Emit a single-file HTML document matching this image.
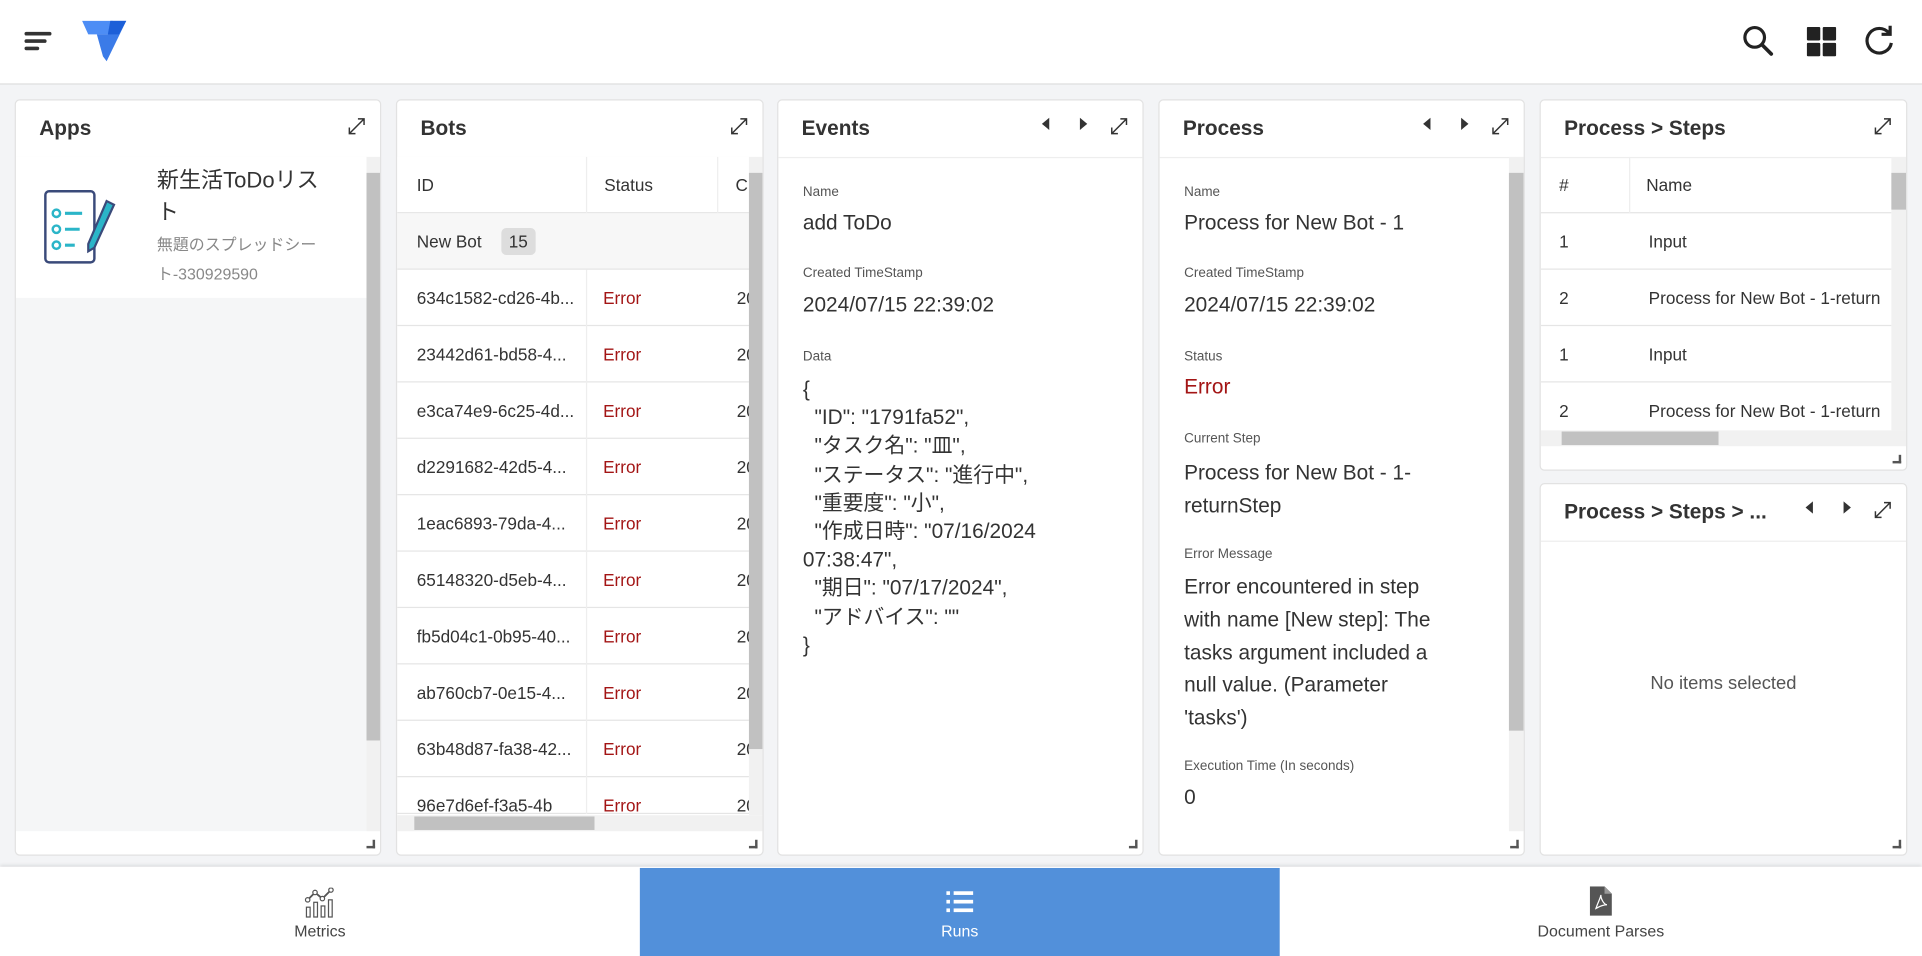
<!DOCTYPE html>
<html><head><meta charset="utf-8">
<style>
html,body{margin:0;padding:0;width:1922px;height:956px;overflow:hidden;background:#f3f4f6;}
#w{position:absolute;left:0;top:0;width:1568px;height:780px;transform:scale(1.22577,1.22594);transform-origin:0 0;font-family:"Liberation Sans","Noto Sans CJK JP",sans-serif;color:#333;background:#f3f4f6;}
.a{position:absolute;}
.hdr{left:0;top:0;width:1568px;height:68px;background:#fff;border-bottom:1px solid #ddd;}
.pn{position:absolute;background:#fff;border:1px solid #e2e2e2;border-radius:4px;box-sizing:border-box;overflow:hidden;}
.ph{position:absolute;left:0;top:0;right:0;height:46px;border-bottom:1px solid #eee;}
.pt{position:absolute;left:19px;top:13px;font-size:17px;font-weight:bold;color:#333;white-space:nowrap;}
.ex{position:absolute;top:12px;right:10px;width:18px;height:18px;}
.ar{position:absolute;top:14px;width:0;height:0;border-top:5px solid transparent;border-bottom:5px solid transparent;}
.al{border-right:6px solid #333;}
.arr{border-left:6px solid #333;}
.rs{position:absolute;right:4px;bottom:5px;width:7px;height:7px;border-right:2px solid #555;border-bottom:2px solid #555;box-sizing:border-box;}
.vs{position:absolute;width:12px;background:#f1f1f1;}
.th{position:absolute;left:0;width:12px;background:#c1c1c1;}
.lb{position:absolute;font-size:11px;color:#555;white-space:nowrap;}
.vl{position:absolute;font-size:17px;color:#333;white-space:nowrap;}
.row{position:absolute;left:0;height:46px;border-bottom:1px solid #e5e5e5;box-sizing:border-box;font-size:14px;}
.row span{position:absolute;top:15px;white-space:nowrap;}
.err{color:#a31515;}
.nav{position:absolute;top:708px;height:72px;text-align:center;font-size:13px;}
</style></head><body><div id="w">
<div class="a hdr">
 <div class="a" style="left:20px;top:26px;width:22px;height:3px;background:#333;border-radius:2px"></div>
 <div class="a" style="left:20px;top:32px;width:18px;height:3px;background:#333;border-radius:2px"></div>
 <div class="a" style="left:20px;top:38px;width:12px;height:3px;background:#333;border-radius:2px"></div>
 <svg class="a" style="left:66px;top:16px" width="38" height="36" viewBox="0 0 38 36">
  <polygon points="1,1 26,1 22,12 6,12" fill="#4d8df5"/>
  <polygon points="24,1 37,1 21,34 18,30 13,12 22,12" fill="#3b7be8"/>
  <polygon points="24,1 37,1 31,12 22,12" fill="#1c5fd8"/>
 </svg>
 <svg class="a" style="left:1421px;top:20px" width="26" height="26" viewBox="0 0 26 26"><circle cx="10.5" cy="10.5" r="8" fill="none" stroke="#222" stroke-width="2.6"/><line x1="16.5" y1="16.5" x2="24" y2="24" stroke="#222" stroke-width="3" stroke-linecap="round"/></svg>
 <svg class="a" style="left:1474px;top:22px" width="24" height="24" viewBox="0 0 24 24"><rect x="0" y="0" width="11" height="11" rx="1" fill="#222"/><rect x="13" y="0" width="11" height="11" rx="1" fill="#222"/><rect x="0" y="13" width="11" height="11" rx="1" fill="#222"/><rect x="13" y="13" width="11" height="11" rx="1" fill="#222"/></svg>
 <svg class="a" style="left:1520px;top:20px" width="26" height="26" viewBox="0 0 26 26"><path d="M21 7 A10 10 0 1 0 23 15" fill="none" stroke="#222" stroke-width="2.6"/><polyline points="22,1 22,8 15,8" fill="none" stroke="#222" stroke-width="2.6"/></svg>
</div>

<!-- Apps -->
<div class="pn" style="left:12px;top:81px;width:299px;height:617px">
 <div class="ph"><div class="pt">Apps</div><svg class="ex" viewBox="0 0 18 18"><path d="M3 15 L15 3 M10 3 H15 V8 M3 10 V15 H8" fill="none" stroke="#333" stroke-width="1.2"/></svg></div>
 <div class="a" style="left:0;top:46px;width:286px;height:550px;background:#f5f6f7"></div>
 <div class="a" style="left:0;top:46px;width:286px;height:115px;background:#fff"></div>
 <svg class="a" style="left:22px;top:70px" width="64" height="66" viewBox="0 0 64 66">
  <rect x="2" y="4" width="40" height="58" rx="3" fill="#fff" stroke="#3a4a7a" stroke-width="2"/>
  <circle cx="11" cy="22" r="3" fill="none" stroke="#2bb5c8" stroke-width="2"/><line x1="18" y1="22" x2="32" y2="22" stroke="#2bb5c8" stroke-width="2.5"/>
  <circle cx="11" cy="35" r="3" fill="none" stroke="#2bb5c8" stroke-width="2"/><line x1="18" y1="35" x2="30" y2="35" stroke="#2bb5c8" stroke-width="2.5"/>
  <circle cx="11" cy="48" r="3" fill="none" stroke="#2bb5c8" stroke-width="2"/><line x1="18" y1="48" x2="26" y2="48" stroke="#2bb5c8" stroke-width="2.5"/>
  <polygon points="52,12 58,15 42,50 37,53 37,47" fill="#2bb5c8" stroke="#3a4a7a" stroke-width="1.8"/>
 </svg>
 <div class="a" style="left:115px;top:52px;font-size:18px;line-height:26px;color:#333;white-space:nowrap">新生活ToDoリス<br>ト</div>
 <div class="a" style="left:115px;top:106px;font-size:13px;line-height:24px;color:#888;white-space:nowrap">無題のスプレッドシー<br>ト-330929590</div>
 <div class="vs" style="left:286px;top:46px;height:550px"><div class="th" style="top:13px;height:463px"></div></div>
 <div class="rs"></div>
</div>

<!-- Bots -->
<div class="pn" style="left:323px;top:81px;width:300px;height:617px">
 <div class="ph"><div class="pt">Bots</div><svg class="ex" viewBox="0 0 18 18"><path d="M3 15 L15 3 M10 3 H15 V8 M3 10 V15 H8" fill="none" stroke="#333" stroke-width="1.2"/></svg></div>
 <div class="row" style="top:46px;width:287px;background:#fff"><span style="left:16px">ID</span><span style="left:169px">Status</span><span style="left:276px">C</span></div>
 <div class="a" style="left:154px;top:46px;width:1px;height:46px;background:#eee"></div>
 <div class="a" style="left:261px;top:46px;width:1px;height:46px;background:#eee"></div>
 <div class="row" style="top:92px;width:287px;background:#f7f7f7"><span style="left:16px">New Bot</span><span style="left:85px;top:12px;background:#ddd;border-radius:4px;padding:3px 6px">15</span></div>
 <div class="row" style="top:138px;width:287px"><span style="left:16px">634c1582-cd26-4b...</span><span class="err" style="left:168px">Error</span><span style="left:277px">20</span></div>
 <div class="row" style="top:184px;width:287px"><span style="left:16px">23442d61-bd58-4...</span><span class="err" style="left:168px">Error</span><span style="left:277px">20</span></div>
 <div class="row" style="top:230px;width:287px"><span style="left:16px">e3ca74e9-6c25-4d...</span><span class="err" style="left:168px">Error</span><span style="left:277px">20</span></div>
 <div class="row" style="top:276px;width:287px"><span style="left:16px">d2291682-42d5-4...</span><span class="err" style="left:168px">Error</span><span style="left:277px">20</span></div>
 <div class="row" style="top:322px;width:287px"><span style="left:16px">1eac6893-79da-4...</span><span class="err" style="left:168px">Error</span><span style="left:277px">20</span></div>
 <div class="row" style="top:368px;width:287px"><span style="left:16px">65148320-d5eb-4...</span><span class="err" style="left:168px">Error</span><span style="left:277px">20</span></div>
 <div class="row" style="top:414px;width:287px"><span style="left:16px">fb5d04c1-0b95-40...</span><span class="err" style="left:168px">Error</span><span style="left:277px">20</span></div>
 <div class="row" style="top:460px;width:287px"><span style="left:16px">ab760cb7-0e15-4...</span><span class="err" style="left:168px">Error</span><span style="left:277px">20</span></div>
 <div class="row" style="top:506px;width:287px"><span style="left:16px">63b48d87-fa38-42...</span><span class="err" style="left:168px">Error</span><span style="left:277px">20</span></div>
 <div class="row" style="top:552px;width:287px;height:30px;overflow:hidden"><span style="left:16px">96e7d6ef-f3a5-4b</span><span class="err" style="left:168px">Error</span><span style="left:277px">20</span></div>
 <div class="a" style="left:154px;top:138px;width:1px;height:444px;background:#eee"></div>
 <div class="a" style="left:0;top:583px;width:299px;height:13px;background:#f1f1f1"><div class="a" style="left:14px;top:1px;width:147px;height:11px;background:#c1c1c1"></div></div>
 <div class="vs" style="left:287px;top:46px;height:537px"><div class="th" style="top:13px;height:470px"></div></div>
 <div class="rs"></div>
</div>

<!-- Events -->
<div class="pn" style="left:634px;top:81px;width:299px;height:617px">
 <div class="ph"><div class="pt">Events</div><div class="ar al" style="left:215px"></div><div class="ar arr" style="left:246px"></div><svg class="ex" viewBox="0 0 18 18"><path d="M3 15 L15 3 M10 3 H15 V8 M3 10 V15 H8" fill="none" stroke="#333" stroke-width="1.2"/></svg></div>
 <div class="lb" style="left:20px;top:69px">Name</div>
 <div class="vl" style="left:20px;top:90px">add ToDo</div>
 <div class="lb" style="left:20px;top:135px">Created TimeStamp</div>
 <div class="vl" style="left:20px;top:157px">2024/07/15 22:39:02</div>
 <div class="lb" style="left:20px;top:203px">Data</div>
 <div class="vl" style="left:20px;top:224px;line-height:23.2px;white-space:pre">{
  "ID": "1791fa52",
  "タスク名": "皿",
  "ステータス": "進行中",
  "重要度": "小",
  "作成日時": "07/16/2024
07:38:47",
  "期日": "07/17/2024",
  "アドバイス": ""
}</div>
 <div class="rs"></div>
</div>

<!-- Process -->
<div class="pn" style="left:945px;top:81px;width:299px;height:617px">
 <div class="ph"><div class="pt">Process</div><div class="ar al" style="left:215px"></div><div class="ar arr" style="left:246px"></div><svg class="ex" viewBox="0 0 18 18"><path d="M3 15 L15 3 M10 3 H15 V8 M3 10 V15 H8" fill="none" stroke="#333" stroke-width="1.2"/></svg></div>
 <div class="lb" style="left:20px;top:69px">Name</div>
 <div class="vl" style="left:20px;top:90px">Process for New Bot - 1</div>
 <div class="lb" style="left:20px;top:135px">Created TimeStamp</div>
 <div class="vl" style="left:20px;top:157px">2024/07/15 22:39:02</div>
 <div class="lb" style="left:20px;top:203px">Status</div>
 <div class="vl err" style="left:20px;top:224px">Error</div>
 <div class="lb" style="left:20px;top:270px">Current Step</div>
 <div class="vl" style="left:20px;top:291px;line-height:26.5px">Process for New Bot - 1-<br>returnStep</div>
 <div class="lb" style="left:20px;top:364px">Error Message</div>
 <div class="vl" style="left:20px;top:384px;line-height:26.8px">Error encountered in step<br>with name [New step]: The<br>tasks argument included a<br>null value. (Parameter<br>'tasks')</div>
 <div class="lb" style="left:20px;top:537px">Execution Time (In seconds)</div>
 <div class="vl" style="left:20px;top:559px">0</div>
 <div class="vs" style="left:285px;top:46px;height:550px"><div class="th" style="top:13px;height:455px"></div></div>
 <div class="rs"></div>
</div>

<!-- Steps -->
<div class="pn" style="left:1256px;top:81px;width:300px;height:303px">
 <div class="ph"><div class="pt">Process &gt; Steps</div><svg class="ex" viewBox="0 0 18 18"><path d="M3 15 L15 3 M10 3 H15 V8 M3 10 V15 H8" fill="none" stroke="#333" stroke-width="1.2"/></svg></div>
 <div class="row" style="top:46px;width:286px"><span style="left:15px">#</span><span style="left:86px">Name</span></div>
 <div class="a" style="left:72px;top:46px;width:1px;height:46px;background:#eee"></div>
 <div class="row" style="top:92px;width:286px"><span style="left:15px">1</span><span style="left:88px">Input</span></div>
 <div class="row" style="top:138px;width:286px;overflow:hidden"><span style="left:15px">2</span><span style="left:88px">Process for New Bot - 1-return</span></div>
 <div class="row" style="top:184px;width:286px"><span style="left:15px">1</span><span style="left:88px">Input</span></div>
 <div class="row" style="top:230px;width:286px;height:39px;overflow:hidden;border:0"><span style="left:15px">2</span><span style="left:88px">Process for New Bot - 1-return</span></div>
 <div class="a" style="left:0;top:269px;width:298px;height:13px;background:#f1f1f1"><div class="a" style="left:17px;top:1px;width:128px;height:11px;background:#c1c1c1"></div></div>
 <div class="vs" style="left:286px;top:46px;height:223px"><div class="th" style="top:13px;height:30px"></div></div>
 <div class="rs"></div>
</div>

<div class="pn" style="left:1256px;top:394px;width:300px;height:304px">
 <div class="ph"><div class="pt">Process &gt; Steps &gt; ...</div><div class="ar al" style="left:216px"></div><div class="ar arr" style="left:247px"></div><svg class="ex" viewBox="0 0 18 18"><path d="M3 15 L15 3 M10 3 H15 V8 M3 10 V15 H8" fill="none" stroke="#333" stroke-width="1.2"/></svg></div>
 <div class="a" style="left:0;width:298px;top:154px;text-align:center;font-size:15px;color:#555">No items selected</div>
 <div class="rs"></div>
</div>

<!-- Bottom nav -->
<div class="a" style="left:0;top:707px;width:1568px;height:73px;background:#fff;box-shadow:0 -1px 3px rgba(0,0,0,.12)"></div>
<div class="nav" style="left:0;width:522px">
 <svg class="a" style="left:248px;top:16px" width="26" height="25" viewBox="0 0 26 25"><polyline points="3,10 9,4 15,9 22,2" fill="none" stroke="#555" stroke-width="1.5"/><circle cx="3" cy="10" r="1.8" fill="#fff" stroke="#555"/><circle cx="9" cy="4" r="1.8" fill="#fff" stroke="#555"/><circle cx="15" cy="9" r="1.8" fill="#fff" stroke="#555"/><circle cx="22" cy="2" r="1.8" fill="#fff" stroke="#555"/><rect x="2" y="16" width="3" height="8" fill="none" stroke="#555"/><rect x="8" y="12" width="3" height="12" fill="none" stroke="#555"/><rect x="14" y="15" width="3" height="9" fill="none" stroke="#555"/><rect x="20" y="10" width="3" height="14" fill="none" stroke="#555"/></svg>
 <div class="a" style="left:0;width:522px;top:44px;color:#444">Metrics</div>
</div>
<div class="nav" style="left:522px;width:522px;background:#5290da">
 <svg class="a" style="left:250px;top:18px" width="22" height="20" viewBox="0 0 22 20"><rect x="0" y="1" width="3" height="3" fill="#fff"/><rect x="6" y="1" width="16" height="3" fill="#fff"/><rect x="0" y="8" width="3" height="3" fill="#fff"/><rect x="6" y="8" width="16" height="3" fill="#fff"/><rect x="0" y="15" width="3" height="3" fill="#fff"/><rect x="6" y="15" width="16" height="3" fill="#fff"/></svg>
 <div class="a" style="left:0;width:522px;top:44px;color:#fff">Runs</div>
</div>
<div class="nav" style="left:1044px;width:524px">
 <svg class="a" style="left:253px;top:15px" width="18" height="24" viewBox="0 0 18 24"><path d="M0 0 H12 L18 6 V24 H0 Z" fill="#555"/><path d="M12 0 V6 H18" fill="#999"/><path d="M5 18 C7 12 9 9 9 7 C9 11 12 15 14 15 C10 15 7 17 5 18 Z" fill="none" stroke="#fff" stroke-width="1"/></svg>
 <div class="a" style="left:0;width:524px;top:44px;color:#444">Document Parses</div>
</div>
</div></body></html>
